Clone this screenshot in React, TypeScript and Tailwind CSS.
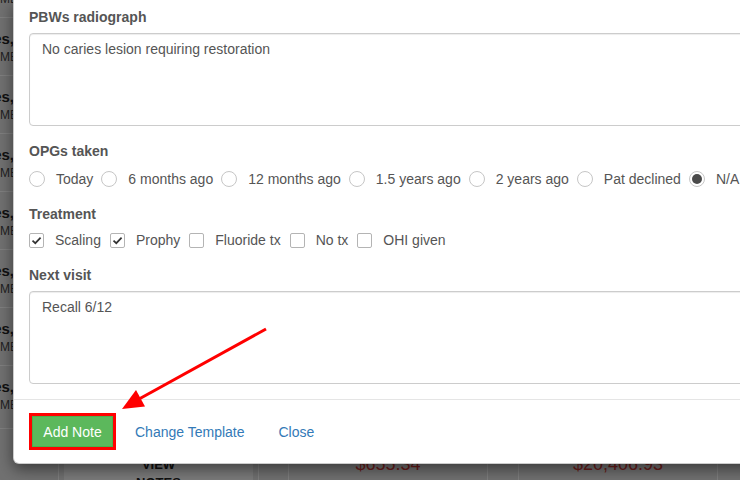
import React from "react";

const opgOptions = [
  "Today",
  "6 months ago",
  "12 months ago",
  "1.5 years ago",
  "2 years ago",
  "Pat declined",
  "N/A",
];

const treatments = [
  { label: "Scaling", checked: true },
  { label: "Prophy", checked: true },
  { label: "Fluoride tx", checked: false },
  { label: "No tx", checked: false },
  { label: "OHI given", checked: false },
];

// patient rows sitting behind the dialog backdrop
const patientRows = [
  { name: "Hughes, Emma", h: "h-[58px]" },
  { name: "Rhodes, Kate", h: "h-[58px]" },
  { name: "Jones, Peter", h: "h-[58px]" },
  { name: "Hayes, Liam", h: "h-[58px]" },
  { name: "Moses, Anna", h: "h-[58px]" },
  { name: "Reyes, Maria", h: "h-[58px]" },
  { name: "Wales, Tom", h: "h-[63px]" },
];

function Radio({ label, checked }: { label: string; checked?: boolean }) {
  return (
    <label className="mr-[8px] flex items-center">
      <span className="mb-px flex h-4 w-4 items-center justify-center rounded-full border border-[#c6c6c6] bg-white">
        {checked && <span className="h-[10px] w-[10px] rounded-full bg-[#4a4a4a]" />}
      </span>
      <span className="ml-[11px] whitespace-nowrap">{label}</span>
    </label>
  );
}

function Checkbox({ label, checked }: { label: string; checked?: boolean }) {
  return (
    <label className="mr-[9px] flex items-center">
      <span className="flex h-[15px] w-[15px] items-center justify-center rounded-[2px] border border-[#b4b4b4] bg-white">
        {checked && (
          <svg width="11" height="11" viewBox="0 0 11 11">
            <path d="M1.5 5.6 L4.3 8.2 L9.6 2.6" fill="none" stroke="#333" strokeWidth="1.7" />
          </svg>
        )}
      </span>
      <span className="ml-[11px] whitespace-nowrap">{label}</span>
    </label>
  );
}

function Backdrop() {
  return (
    <div className="flex flex-col">
      <div className="h-[18px] border-b border-white">
        <div className="-mt-[9px] text-[12px] leading-4 text-[#444]">MEDICARE</div>
      </div>
      {patientRows.map((row) => (
        <div key={row.name} className={`${row.h} border-b border-white pt-[11px]`}>
          <div className="flex w-[14px] justify-end whitespace-nowrap text-[15px] leading-5 font-bold text-[#222]">
            {row.name.split(" ")[0]}
          </div>
          <div className="whitespace-nowrap text-[12px] leading-4 text-[#444]">MEDICARE</div>
        </div>
      ))}
      <div className="flex h-[60px]">
        <div className="w-[58px]" />
        <div className="w-[200px] border-l border-white px-[5px]">
          <div className="h-full bg-[#f6f6f6] pt-[27px] text-center text-[13px] leading-[18px] font-bold text-[#222]">
            <div>VIEW</div>
            <div>NOTES</div>
          </div>
        </div>
        <div className="w-[30px] border-l border-white" />
        <div className="w-[199px] border-l border-white pt-[23px] text-center text-[18px] leading-6 text-[#d63a36]">
          $655.34
        </div>
        <div className="w-[31px] border-l border-white" />
        <div className="w-[199px] border-l border-white pt-[23px] text-center text-[18px] leading-6 text-[#d63a36]">
          $20,406.93
        </div>
        <div className="flex-1 border-l border-white" />
      </div>
    </div>
  );
}

export default function App() {
  return (
    <div className="relative h-[480px] w-[740px] overflow-hidden bg-[#e2e2e2] font-['Liberation_Sans',Arial,sans-serif] text-[14px]">
      <Backdrop />
      <div className="absolute inset-0 bg-black/50" />

      {/* note dialog */}
      <div className="absolute top-0 left-[13px] w-[780px] rounded-b-[6px] border border-t-0 border-black/20 bg-white text-[#555] shadow-[0_5px_15px_rgba(0,0,0,0.5)]">
        <div className="px-[15px] pt-[7px] pb-[15px]">
          <div className="mb-[6px] h-5 leading-5 font-bold">PBWs radiograph</div>
          <textarea
            readOnly
            defaultValue="No caries lesion requiring restoration"
            className="block h-[93px] w-full resize-none rounded-[4px] border border-[#ccc] px-[12px] pt-[5px] leading-5 text-[#555] shadow-[inset_0_1px_1px_rgba(0,0,0,0.075)] outline-none"
          />

          <div className="mt-[15px] mb-[8px] h-5 leading-5 font-bold">OPGs taken</div>
          <div className="flex h-5 items-center leading-5">
            {opgOptions.map((o) => (
              <Radio key={o} label={o} checked={o === "N/A"} />
            ))}
          </div>

          <div className="mt-[15px] mb-[6px] h-5 leading-5 font-bold">Treatment</div>
          <div className="flex h-5 items-center leading-5">
            {treatments.map((t) => (
              <Checkbox key={t.label} label={t.label} checked={t.checked} />
            ))}
          </div>

          <div className="mt-[15px] mb-[6px] h-5 leading-5 font-bold">Next visit</div>
          <textarea
            readOnly
            defaultValue="Recall 6/12"
            className="block h-[93px] w-full resize-none rounded-[4px] border border-[#ccc] px-[12px] pt-[5px] leading-5 text-[#555] shadow-[inset_0_1px_1px_rgba(0,0,0,0.075)] outline-none"
          />
        </div>

        <div className="flex items-center border-t border-[#e5e5e5] px-[15px] pt-[13px] pb-[13px]">
          <button className="h-[37px] w-[87px] border-[3px] border-[#f00] bg-[#5cb85c] leading-5 text-white shadow-[inset_0_0_0_1px_#4cae4c]">
            Add Note
          </button>
          <a className="ml-[19px] leading-5 text-[#337ab7]">Change Template</a>
          <a className="ml-[34px] leading-5 text-[#337ab7]">Close</a>
        </div>
      </div>

      {/* annotation arrow */}
      <svg className="pointer-events-none absolute inset-0" width="740" height="480" viewBox="0 0 740 480">
        <line x1="266" y1="329" x2="140" y2="398.5" stroke="#f00" strokeWidth="3" />
        <polygon points="122,409 145,406.5 136,390" fill="#f00" />
      </svg>
    </div>
  );
}
